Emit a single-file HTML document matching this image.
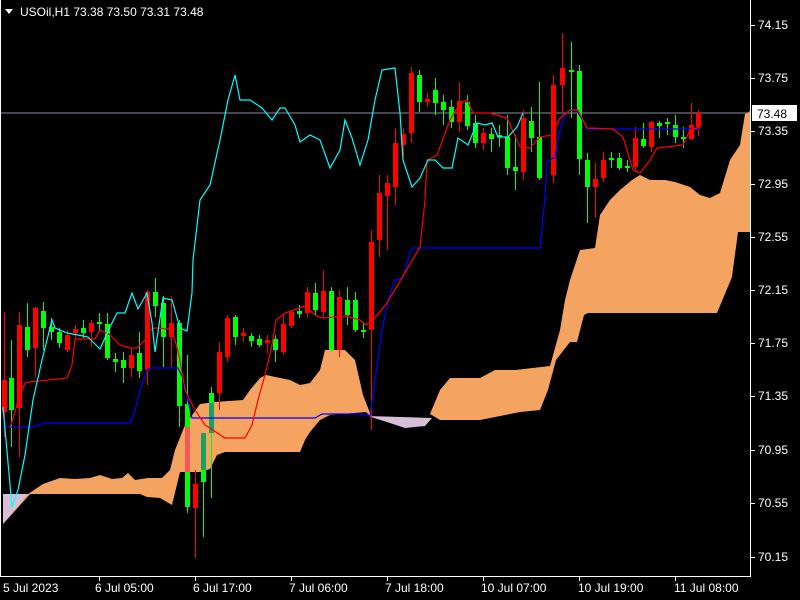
<!DOCTYPE html>
<html><head><meta charset="utf-8"><style>
html,body{margin:0;padding:0;background:#000;width:800px;height:600px;overflow:hidden}
svg{display:block}
text{font-family:"Liberation Sans",sans-serif;font-size:12px;fill:#fff}
</style></head><body>
<svg id="c" width="800" height="600" xmlns="http://www.w3.org/2000/svg">
<rect width="800" height="600" fill="#000"/>
<!-- cloud 1 -->
<polygon fill="#d8bfd8" points="3,494 30,494 3,524"/>
<polygon fill="#f4a460" points="3,524 28,494 43,484 60,478 75,479 90,478 100,475 112,479 122,478 128,473 135,480 148,478 162,478 170,470 175,450 185,425 200,404 215,402 243,400 250,390 260,378 266,375 290,380 300,385 310,383 320,370 325,350 345,350 355,360 363,395 372,418 366,412 330,415 320,420 310,432 305,440 300,452 225,452 217,455 210,469 200,472 180,472 172,505 160,498 147,497 140,494 30,494"/>
<polygon fill="#d8bfd8" points="368,416 432,418 425,426 405,428 390,423"/>
<polygon fill="#f4a460" points="430,414 440,390 450,378 480,378 495,370 515,370 550,366 560,330 565,300 570,280 580,250 595,248 600,215 610,200 620,190 632,180 640,175 650,180 665,180 675,182 690,187 700,195 710,198 720,193 730,160 740,145 745,114 750,111 750,232 738,232 732,277 717,313 588,313 584,315 577,342 570,342 556,360 548,390 540,410 520,412 480,420 440,420"/>
<line x1="0" y1="113" x2="750" y2="113" stroke="#8a8fa0" stroke-width="1"/>
<g id="candles"></g>
<polyline fill="none" stroke="#0000ff" stroke-width="1.2" points="3,427 30,427 40,425 42,423 130,423 135,410 140,390 147,370 150,368 178,368 183,378 192,418 195,418 315,418 322,414 360,414 370,416 375,380 382,330 388,300 395,280 403,278 410,252 412,248 540,248 545,197 547,162 555,157 560,130 565,115 570,110 577,111 582,119 587,129 700,129"/>
<polyline fill="none" stroke="#ff0000" stroke-width="1.2" points="10,428 20,395 25,383 30,382 67,378 72,365 75,339 95,339 100,330 110,335 120,345 130,348 137,348 145,340 150,330 155,328 170,329 175,340 180,360 185,390 195,410 205,425 225,438 245,438 252,425 258,400 265,375 272,345 276,320 285,313 305,306 315,315 322,318 345,316 360,320 366,325 373,320 387,303 420,247 425,200 427,160 437,155 450,120 460,103 467,100 473,113 490,113 507,118 520,147 530,148 540,137 552,135 560,118 570,110 578,110 587,128 613,129 623,137 633,170 640,173 650,160 657,148 683,145 690,130 700,127"/>
<polyline fill="none" stroke="#00ffff" stroke-width="1.2" points="3,407 12,507 18,490 25,455 33,400 42,360 52,320 55,328 67,333 78,335 88,337 100,349 110,327 117,313 125,313 132,293 138,309 147,293 152,323 155,352 163,298 172,300 180,328 187,331 192,293 193,260 200,200 210,185 220,140 228,100 235,75 240,100 250,100 262,108 272,120 280,108 285,108 295,125 300,142 310,135 320,140 330,168 340,150 345,120 352,138 360,165 368,140 375,100 382,70 395,68 400,113 403,160 412,187 420,178 428,160 435,160 443,168 452,168 458,138 468,145 477,123 485,125 492,123 498,137 508,137 517,127 523,113"/>
<!-- axes -->
<line x1="750.5" y1="0" x2="750.5" y2="576" stroke="#fff"/>
<line x1="0" y1="576.5" x2="751" y2="576.5" stroke="#fff"/>
<line x1="0.5" y1="0" x2="0.5" y2="576" stroke="#fff"/>
<g id="ax"></g>
<rect x="752" y="105" width="45" height="16" fill="#fff"/>
<text x="757" y="118" style="fill:#000">73.48</text>
<polygon points="5,9 13,9 9,14" fill="#fff"/>
<text x="20" y="16">USOil,H1  73.38 73.50 73.31 73.48</text>
</svg>
<script>
var ns="http://www.w3.org/2000/svg",g=document.getElementById('candles');
function el(n,a,p){var e=document.createElementNS(ns,n);for(var k in a)e.setAttribute(k,a[k]);p.appendChild(e);return e}
var G='#00ff00',R='#ff0000';
var d=[[4,380,412,312,437,R],[11,378,410,340,447,G],[19,325,408,312,457,R],[27,327,350,303,357,G],[35,308,348,307,377,R],[43,311,328,302,350,G],[51,327,332,318,340,G],[59,332,343,328,348,G],[67,335,350,330,352,R],[75,329,333,325,338,R],[83,328,333,320,338,G],[91,323,332,320,347,R],[99,322,324,313,332,G],[107,324,358,313,360,G],[115,359,362,353,372,G],[123,360,368,352,383,G],[131,355,368,348,377,R],[139,353,371,332,378,G],[147,292,370,290,385,R],[155,292,306,278,317,G],[163,303,337,296,367,G],[171,323,337,296,367,R],[179,323,406,320,427,G],[187,404,507,355,513,G],[195,484,508,470,558,R],[203,433,482,433,537,G],[211,393,433,387,498,G],[219,352,393,342,410,R],[227,318,357,315,362,R],[235,317,337,315,345,G],[243,333,336,328,342,R],[251,336,341,333,347,G],[259,339,345,335,347,G],[267,340,343,335,353,R],[275,339,350,335,362,G],[283,324,352,315,355,R],[291,312,326,310,328,R],[299,311,314,305,318,G],[307,292,313,287,317,R],[315,293,310,283,315,G],[323,291,312,270,317,R],[331,291,350,287,352,G],[339,297,350,290,357,R],[347,300,315,287,325,G],[355,300,330,292,332,G],[363,330,332,322,338,G],[371,242,330,230,430,R],[379,193,240,175,257,R],[387,183,196,175,250,R],[395,143,187,128,205,R],[403,134,145,128,157,R],[411,73,133,67,143,R],[419,75,102,70,112,G],[427,99,102,93,107,R],[435,90,103,78,115,G],[443,102,110,95,125,G],[451,107,122,100,128,G],[459,101,122,82,132,R],[467,102,126,95,130,G],[475,123,143,115,148,G],[483,133,143,128,150,R],[491,134,139,128,152,G],[499,135,137,125,147,G],[507,137,168,115,175,G],[515,167,171,135,190,G],[523,118,172,110,180,R],[531,121,138,107,152,G],[539,137,178,82,180,G],[553,85,175,75,183,R],[562,68,85,33,113,R],[571,70,72,42,118,G],[579,71,159,65,175,G],[587,160,187,153,223,G],[595,179,187,163,218,R],[603,160,178,152,182,R],[611,158,160,152,168,G],[619,158,168,153,170,G],[627,166,168,160,172,G],[635,138,167,127,170,R],[643,139,146,123,148,G],[651,122,147,121,152,R],[659,123,126,121,138,G],[667,122,124,118,135,G],[675,125,137,115,143,G],[683,137,139,127,148,G],[691,125,139,103,140,R],[698,113,127,110,136,R]];
d.forEach(function(c){el('line',{x1:c[0]+.5,x2:c[0]+.5,y1:c[3],y2:c[4],stroke:c[5]},g);el('rect',{x:c[0]-2,y:c[1],width:5,height:Math.max(1,c[2]-c[1]),fill:c[5]},g)});
el('rect',{x:185,y:427,width:5,height:45,fill:'#f25a5a'},g);
el('rect',{x:201,y:433,width:5,height:37,fill:'#1aa060'},g);
el('rect',{x:209,y:403,width:5,height:30,fill:'#1aa060'},g);
var ax=document.getElementById('ax');
var p=[['74.15',25],['73.75',78],['73.35',131],['72.95',184],['72.55',237],['72.15',290],['71.75',343],['71.35',396],['70.95',450],['70.55',503],['70.15',557]];
p.forEach(function(q){el('line',{x1:751,x2:755,y1:q[1]+.5,y2:q[1]+.5,stroke:'#fff'},ax);var t=el('text',{x:758,y:q[1]+4},ax);t.textContent=q[0]});
var t2=[['5 Jul 2023',3,0],['6 Jul 05:00',95,99],['6 Jul 17:00',193,195],['7 Jul 06:00',289,291],['7 Jul 18:00',385,387],['10 Jul 07:00',481,483],['10 Jul 19:00',578,579],['11 Jul 08:00',674,675]];
t2.forEach(function(q){if(q[2])el('line',{x1:q[2]+.5,x2:q[2]+.5,y1:577,y2:581,stroke:'#fff'},ax);var t=el('text',{x:q[1],y:592},ax);t.textContent=q[0]});
</script>
</body></html>
